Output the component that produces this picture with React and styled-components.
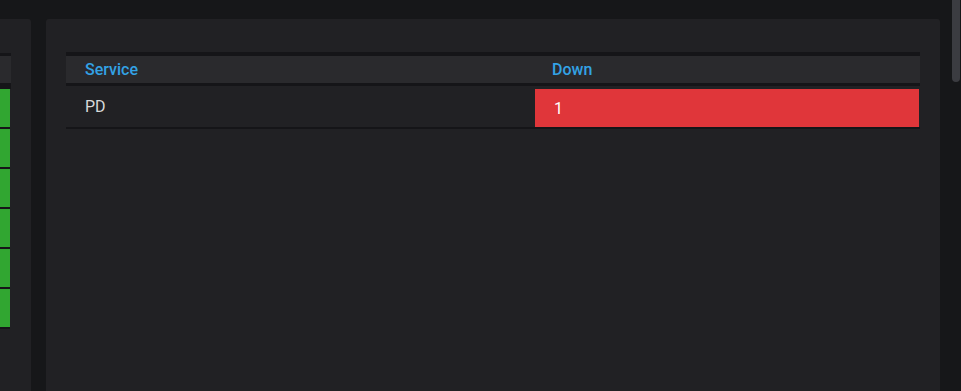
import React from 'react';
import styled, { createGlobalStyle } from 'styled-components';

const GlobalStyle = createGlobalStyle`
    html, body {
        margin:0;
        padding:0;
        background:#161719;
        overflow:hidden;
    }
    body {
        font-family: Roboto, "Noto Sans", "Liberation Sans", sans-serif;
        font-size:16px;
        color:#d8d9da;
    }
`
const Page = styled.div`
    width:961px;
    height:391px;
    display:grid;
    grid-template-columns:31px 894px 1fr;
    column-gap:15px;
    padding-top:19px;
    box-sizing:border-box;
    overflow:hidden;
`
const Panel = styled.div`
    background:#212124;
    border-radius:${props => props.$left ? '0 3px 0 0' : '3px 3px 0 0'};
    padding:${props => props.$left ? '33px 20px 0 0' : '33px 20px 0 20px'};
    overflow:hidden;
`
const Table = styled.div`
    display:flex;
    flex-direction:column;
    border-top:4px solid #151518;
`
const HeaderRow = styled.div`
    display:grid;
    grid-template-columns:469px 1fr;
    height:27px;
    background:#2a2a2d;
    border-bottom:3px solid #151518;
`
const HeaderCell = styled.div`
    display:flex;
    align-items:center;
    padding-left:${props => props.$pad || 19}px;
    color:#33a2e5;
    font-weight:500;
`
const Row = styled.div`
    display:grid;
    grid-template-columns:469px 1fr;
    height:41px;
    border-bottom:2px solid #151518;
`
const Cell = styled.div`
    display:flex;
    align-items:center;
    padding-left:${props => props.$pad || 19}px;
    color:${props => props.$bg ? '#ffffff' : '#d8d9da'};
    background:${props => props.$bg || 'transparent'};
    margin:${props => props.$bg ? '3px 1px 0 0' : '0'};
`
const MiniHeader = styled.div`
    height:27px;
    background:#2a2a2d;
    border-bottom:6px solid #151518;
`
const MiniRow = styled.div`
    width:10px;
    height:38px;
    background:#31a631;
    border-bottom:2px solid #151518;
`
const ScrollArea = styled.div`
    margin:-19px 0 0 -12px;
    display:flex;
    justify-content:flex-end;
    padding-right:1px;
`
const Thumb = styled.div`
    width:8px;
    height:82px;
    background:#3b3c41;
    border-radius:0 0 4px 4px;
`

const greenRows = [0, 1, 2, 3, 4, 5];

const App = () => {
  return (
    <>
      <GlobalStyle />
      <Page>
        <Panel $left>
          <Table style={{ borderTopWidth: 3, marginTop: 1 }}>
            <MiniHeader />
            {greenRows.map(i => <MiniRow key={i} />)}
          </Table>
        </Panel>
        <Panel>
          <Table>
            <HeaderRow>
              <HeaderCell>Service</HeaderCell>
              <HeaderCell $pad={17}>Down</HeaderCell>
            </HeaderRow>
            <Row>
              <Cell>PD</Cell>
              <Cell $bg="#e0363a" $pad={19}>1</Cell>
            </Row>
          </Table>
        </Panel>
        <ScrollArea>
          <Thumb />
        </ScrollArea>
      </Page>
    </>
  );
};

export default App;
